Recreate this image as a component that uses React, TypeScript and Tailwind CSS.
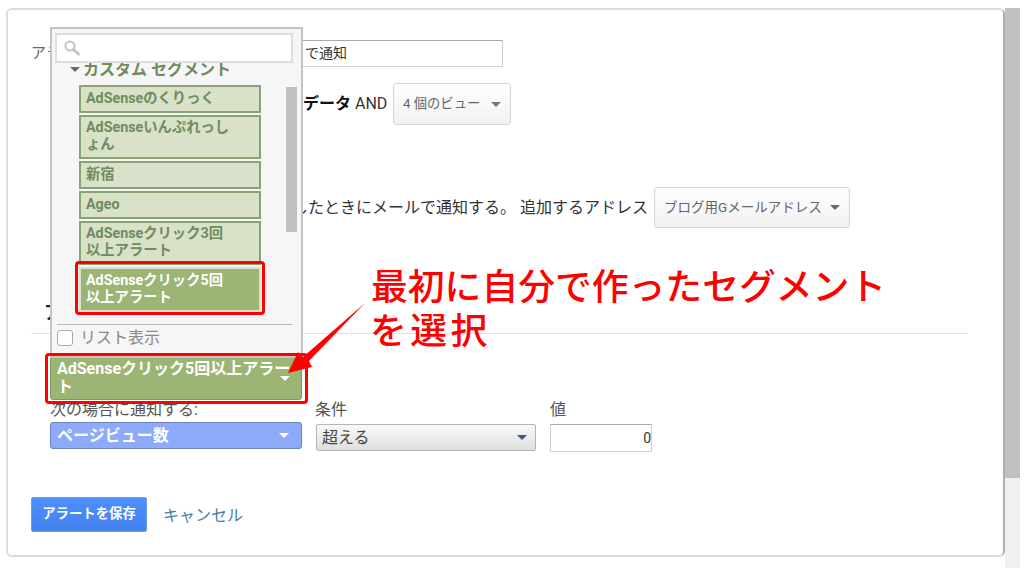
import React from "react";

const Caret = ({ className }: { className: string }) => (
  <span className={`w-0 h-0 border-x-[5px] border-x-transparent border-t-[5px] ${className}`} />
);

const Seg = ({ lines, active, h }: { lines: string[]; active?: boolean; h: string }) => (
  <div
    className={`mb-[2px] w-[182px] border-2 px-[5px] pb-[2px] text-[14.3px] leading-[17px] font-bold flex flex-col justify-center ${h} ${
      active
        ? "bg-[#9cb474] border-[#dbe3cf] text-white"
        : "bg-[#d9e1c9] border-[#8aa374] text-[#6f8c5c]"
    }`}
  >
    {lines.map((l) => (
      <span key={l} className="whitespace-nowrap">{l}</span>
    ))}
  </div>
);

export default function App() {
  return (
    <div
      className="relative flex h-[568px] w-[1024px] overflow-hidden bg-white text-[15px] text-[#444]"
      style={{ fontFamily: 'Roboto, "Noto Sans CJK JP", sans-serif' }}
    >
      <main className="flex-1 pl-[6px] pt-[8px]">
        <section className="relative h-[549px] w-[999px] rounded-[6px] border-2 border-[#dcdcdc] border-r-[#b0b0b0] pl-[23px] pt-[30px]">
          <div className="flex h-[27px] items-center">
            <span className="w-[100px] text-[#666] whitespace-nowrap">アラート名</span>
            <div className="flex h-[27px] w-[372px] items-center border border-[#cfcfcf] border-t-[#a8a8a8] pl-[173px] text-[14px] text-[#333] whitespace-nowrap">
              で通知
            </div>
          </div>

          <div className="mt-[16px] flex h-[42px] items-center">
            <span className="ml-[272px] w-[90px] font-bold text-[16px] text-[#111] whitespace-nowrap">データ <span className="font-normal text-[16px] text-[#333]">AND</span></span>
            <div className="flex h-[42px] w-[118px] items-center justify-between rounded-[3px] border border-[#d4d4d4] bg-gradient-to-b from-white to-[#f1f1f1] px-[9px] text-[13.3px] text-[#666]">
              <span className="whitespace-nowrap">4 個のビュー</span>
              <Caret className="border-t-[#777]" />
            </div>
          </div>

          <div className="mt-[62px] flex h-[41px] items-center">
            <span className="w-[617px] text-right text-[16px] text-[#333] whitespace-nowrap">したときにメールで通知する。 追加するアドレス</span>
            <div className="ml-[6px] flex h-[41px] w-[196px] items-center justify-between rounded-[3px] border border-[#d4d4d4] bg-gradient-to-b from-white to-[#f1f1f1] px-[9px] text-[13.5px] text-[#666]">
              <span className="whitespace-nowrap">ブログ用Gメールアドレス</span>
              <Caret className="border-t-[#666]" />
            </div>
          </div>

          <h2 className="ml-[13px] mt-[73px] text-[18px] leading-[24px] font-bold text-[#222]">アラートの条件</h2>
          <hr className="mt-[8px] w-[937px] border-[#e2e2e2]" />

          <div className="relative ml-[19px] mt-[22px] flex h-[44px] w-[252px] items-center rounded-[3px] border border-[#7f9860] bg-[#9cb474] pl-[6px] text-[16px] leading-[18px] font-bold text-white">
            <span className="w-[240px]">AdSenseクリック5回以上アラート</span>
            <span className="absolute left-[229px] top-[19px] flex">
              <Caret className="border-t-white" />
            </span>
          </div>

          <div className="ml-[19px] flex">
            <div className="w-[266px]">
              <div className="h-[20px] text-[16px] leading-[20px] text-[#555]">次の場合に通知する:</div>
              <div className="mt-[2px] flex h-[27px] w-[252px] items-center justify-between rounded-[3px] border border-[#6c82bd] bg-[#8eaafb] pl-[6px] pr-[12px] text-[16px] font-bold text-white">
                <span>ページビュー数</span>
                <Caret className="border-t-white" />
              </div>
            </div>
            <div className="w-[234px]">
              <div className="h-[20px] -ml-px text-[16px] leading-[20px] text-[#555]">条件</div>
              <div className="mt-[4px] flex h-[27px] w-[220px] items-center justify-between rounded-[2px] border border-[#b5b5b5] bg-gradient-to-b from-[#fafafa] to-[#dedede] pl-[5px] pr-[8px] text-[16px] text-[#444]">
                <span>超える</span>
                <Caret className="border-t-[#3b5a8c]" />
              </div>
            </div>
            <div>
              <div className="h-[20px] text-[16px] leading-[20px] text-[#555]">値</div>
              <div className="mt-[4px] flex h-[28px] w-[102px] items-center justify-end border border-[#cfcfcf] border-t-[#a8a8a8] text-[14px] text-[#333]">
                0
              </div>
            </div>
          </div>

          <div className="mt-[45px] flex items-center">
            <button className="h-[35px] w-[116px] rounded-[2px] border border-[#6a9cf5] bg-gradient-to-b from-[#4d90fe] to-[#4480ee] text-[13.4px] font-bold text-white">
              アラートを保存
            </button>
            <a className="ml-[16px] mt-[3px] text-[16px] text-[#3f7fa8]">キャンセル</a>
          </div>

          {/* segment picker popup */}
          <div className="absolute left-[42px] top-[17px] flex h-[331px] w-[253px] flex-col border-2 border-[#c4c4c4] bg-[#f6f6f6] px-[3px] pt-[4px]">
            <div className="relative z-10 flex h-[30px] w-[238px] items-center border-2 border-[#dfdfdf] bg-white pl-[6px]">
              <svg width="18" height="18" viewBox="0 0 18 18" className="text-[#c4c4c4]">
                <circle cx="7" cy="7" r="4.6" fill="none" stroke="currentColor" strokeWidth="2" />
                <path d="M10.5 10.5 L15.5 15" stroke="currentColor" strokeWidth="3" strokeLinecap="round" />
              </svg>
            </div>
            <div className="relative h-[256px] overflow-hidden">
              <div className="-mt-[2px] ml-[15px] flex h-[17px] items-center gap-[3px] text-[16px] font-bold text-[#6f8c5c] whitespace-nowrap">
                <Caret className="border-t-[#666]" />
                カスタム セグメント
              </div>
              <div className="ml-[24px] mt-[7px] flex flex-col">
                <Seg h="h-[28px]" lines={["AdSenseのくりっく"]} />
                <Seg h="h-[44px]" lines={["AdSenseいんぷれっし", "ょん"]} />
                <Seg h="h-[28px]" lines={["新宿"]} />
                <Seg h="h-[28px]" lines={["Ageo"]} />
                <Seg h="h-[44px]" lines={["AdSenseクリック3回", "以上アラート"]} />
                <Seg active h="h-[45px]" lines={["AdSenseクリック5回", "以上アラート"]} />
              </div>
              <div className="absolute left-[231px] top-[24px] h-[145px] w-[11px] bg-[#c2c2c2]" />
            </div>
            <div className="mt-[5px] h-px w-[235px] bg-[#b8b8b8] ml-[2px]" />
            <label className="ml-[2px] mt-[4px] flex h-[18px] items-center gap-[7px] text-[16px] text-[#888]">
              <span className="h-[16px] w-[16px] rounded-[3px] border border-[#aaa] bg-white" />
              リスト表示
            </label>
          </div>

          {/* red annotation outlines */}
          <div className="absolute left-[67px] top-[251px] h-[54px] w-[190px] rounded-[4px] border-[3px] border-[#f00]" />
          <div className="absolute left-[37px] top-[343px] h-[51px] w-[263px] rounded-[4px] border-[3px] border-[#f00]" />
        </section>
      </main>

      <div className="flex h-full w-[19px] flex-col pr-[4px] pt-[8px]">
        <div className="h-[470px] bg-[#c1c1c1]" />
        <div className="flex-1 bg-[#f1f1f1]" />
      </div>

      {/* annotation text and arrow */}
      <div className="absolute left-[371px] top-[266px] text-[36.8px] font-medium leading-[44px] text-[#f00] whitespace-nowrap">
        最初に自分で作ったセグメント
        <br />
        <span className="-ml-[1px] tracking-[3.5px]">を選択</span>
      </div>
      <svg className="absolute left-0 top-0" width="1024" height="568">
        <polygon points="365,303 309,361 312,367 288,373 298,352 303,357" fill="#f00" />
      </svg>
    </div>
  );
}
